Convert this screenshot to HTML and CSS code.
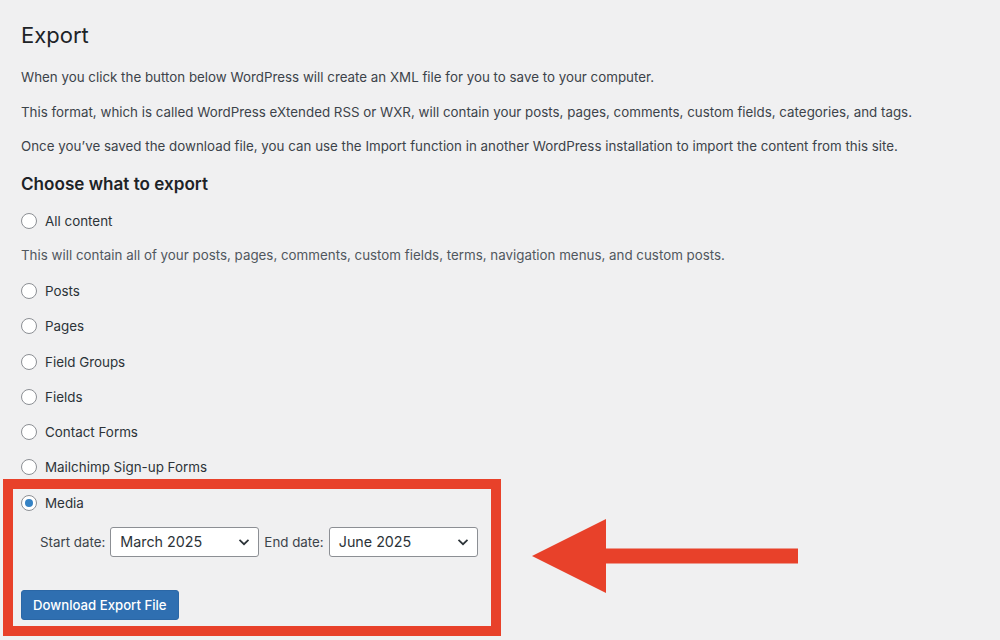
FILE: index.html
```html
<!DOCTYPE html>
<html lang="en">
<head>
<meta charset="utf-8">
<title>Export</title>
<link rel="stylesheet" href="styles.css">
</head>
<body>
<div class="wrap">
  <h1 class="page-title">Export</h1>
  <p class="intro">When you click the button below WordPress will create an XML file for you to save to your computer.</p>
  <p class="intro">This format, which is called WordPress eXtended RSS or WXR, will contain your posts, pages, comments, custom fields, categories, and tags.</p>
  <p class="intro">Once you’ve saved the download file, you can use the Import function in another WordPress installation to import the content from this site.</p>

  <h2 class="section-title">Choose what to export</h2>

  <form class="export-form">
    <label class="option"><input type="radio" name="content" class="radio"> All content</label>
    <p class="description">This will contain all of your posts, pages, comments, custom fields, terms, navigation menus, and custom posts.</p>

    <div class="option-list">
      <label class="option"><input type="radio" name="content" class="radio"> Posts</label>
      <label class="option"><input type="radio" name="content" class="radio"> Pages</label>
      <label class="option"><input type="radio" name="content" class="radio"> Field Groups</label>
      <label class="option"><input type="radio" name="content" class="radio"> Fields</label>
      <label class="option"><input type="radio" name="content" class="radio"> Contact Forms</label>
      <label class="option"><input type="radio" name="content" class="radio"> Mailchimp Sign-up Forms</label>
      <label class="option"><input type="radio" name="content" class="radio" checked> Media</label>
    </div>

    <div class="date-filters">
      <span class="date-label">Start date:</span>
      <div class="select">
        <span>March 2025</span>
        <svg class="chevron" width="14" height="14" viewBox="0 0 14 14"><path d="M2.5 4.8 L7 9.2 L11.5 4.8" fill="none" stroke="#2c3338" stroke-width="1.7"/></svg>
      </div>
      <span class="date-label">End date:</span>
      <div class="select">
        <span>June 2025</span>
        <svg class="chevron" width="14" height="14" viewBox="0 0 14 14"><path d="M2.5 4.8 L7 9.2 L11.5 4.8" fill="none" stroke="#2c3338" stroke-width="1.7"/></svg>
      </div>
    </div>

    <button type="button" class="button-primary">Download Export File</button>
  </form>

  <!-- callout highlighting the media export options -->
  <div class="callout-box"></div>
  <svg class="callout-arrow" width="270" height="76" viewBox="0 0 270 76">
    <polygon points="0,37 74,0 74,74" fill="#e8412a"/>
    <rect x="72" y="29.5" width="194" height="15" fill="#e8412a"/>
  </svg>
</div>
</body>
</html>
```
FILE: styles.css
```css
html, body {
  margin: 0;
  padding: 0;
  background: #f0f0f1;
}

body {
  font-family: Inter, "Noto Sans", "Liberation Sans", sans-serif;
  color: #3c434a;
  width: 1000px;
  height: 640px;
  overflow: hidden;
}

.wrap {
  position: relative;
  padding: 18px 21px 0;
}

.page-title {
  margin: 0;
  font-size: 22px;
  font-weight: 400;
  line-height: 34px;
  color: #1d2327;
}

.intro {
  margin: 15px 0 0;
  font-size: 13.35px;
  line-height: 20px;
}

.intro + .intro {
  margin-top: 14.5px;
}

.section-title {
  margin: 16px 0 0;
  font-size: 17.1px;
  font-weight: 600;
  line-height: 24px;
  color: #1d2327;
}

.export-form {
  margin-top: 13px;
}

.option {
  display: flex;
  align-items: center;
  gap: 8px;
  height: 24px;
  font-size: 13.4px;
  color: #2c3338;
}

.radio {
  appearance: none;
  -webkit-appearance: none;
  margin: 0;
  width: 16px;
  height: 16px;
  border: 1px solid #8c8f94;
  border-radius: 50%;
  background: #fff;
  display: grid;
  place-items: center;
  flex: none;
}

.radio:checked::before {
  content: "";
  width: 8px;
  height: 8px;
  border-radius: 50%;
  background: #3582c4;
}

.description {
  margin: 12px 0 0;
  font-size: 13.35px;
  line-height: 20px;
  color: #50575e;
}

.option-list {
  display: flex;
  flex-direction: column;
  gap: 11.3px;
  margin-top: 14px;
}

.date-filters {
  display: flex;
  align-items: center;
  gap: 5px;
  margin-top: 12px;
  padding-left: 19px;
  font-size: 13.35px;
  color: #3c434a;
}

.select {
  display: flex;
  align-items: center;
  justify-content: space-between;
  box-sizing: border-box;
  width: 149px;
  height: 30px;
  padding: 0 7px 0 9px;
  background: #fff;
  border: 1px solid #8c8f94;
  border-radius: 3px;
  font-size: 14.3px;
  color: #2c3338;
}

.button-primary {
  margin-top: 33px;
  display: block;
  height: 30px;
  padding: 0 11px;
  background: #2f6fb1;
  border: 1px solid #2b67a6;
  border-radius: 3px;
  color: #fff;
  font-family: inherit;
  font-size: 13.2px;
  font-weight: 500;
}

.callout-box {
  position: absolute;
  left: 3px;
  top: 479px;
  width: 498px;
  height: 157px;
  box-sizing: border-box;
  border: 10px solid #e8412a;
}

.callout-arrow {
  position: absolute;
  left: 532px;
  top: 519px;
}
```
